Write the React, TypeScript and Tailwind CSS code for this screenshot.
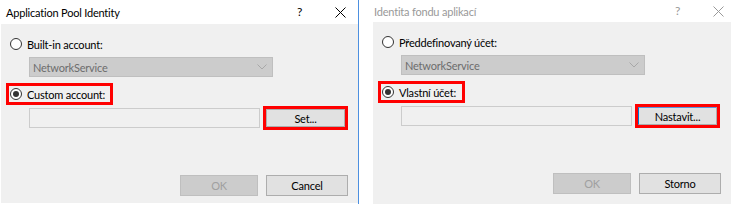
import React from 'react';

interface DialogProps {
  title: string;
  builtIn: string;
  custom: string;
  setLabel: string;
  cancelLabel: string;
  customBoxWidth: string;
  inactive?: boolean;
  focusedSet?: boolean;
}

const Radio = ({ checked }: { checked?: boolean }) => (
  <span className="w-[12px] h-[12px] rounded-full border border-[#333333] bg-white flex items-center justify-center shrink-0">
    {checked && <span className="w-[6px] h-[6px] rounded-full bg-[#333333]" />}
  </span>
);

const Dialog = ({
  title,
  builtIn,
  custom,
  setLabel,
  cancelLabel,
  customBoxWidth,
  inactive = false,
  focusedSet = false,
}: DialogProps) => {
  const titleColor = inactive ? 'text-[#999999]' : 'text-[#000000]';

  return (
    <div className="flex flex-col whitespace-nowrap tracking-[-0.2px]">
      {/* title bar */}
      <div className={`flex items-center ${inactive ? 'h-[22px]' : 'h-[24px]'} ${titleColor}`}>
        <span className="pl-[6px] text-[11px] leading-none flex-1">{title}</span>
        <span className="w-[38px] text-[12px] leading-none">?</span>
        <svg width="11" height="11" viewBox="0 0 11 11" className="mr-[12px]">
          <path d="M0.5 0.5 L10.5 10.5 M10.5 0.5 L0.5 10.5" stroke="currentColor" strokeWidth="1" />
        </svg>
      </div>

      {/* body */}
      <div className={`bg-[#f0f0f0] flex flex-col text-[11px] leading-none text-black ${inactive ? 'h-[182px] w-[358px] ml-[5px]' : 'h-[179px] w-[357px] ml-[1px]'}`}>
        <div className="mt-[14px] h-[12px] flex items-center pl-[9px]">
          <Radio />
          <span className="ml-[5px]">{builtIn}</span>
        </div>

        <div className="mt-[7px] ml-[28px] w-[244px] h-[20px] bg-[#cccccc] border border-[#bfbfbf] flex items-center justify-between px-[3px]">
          <span className="text-[#6d6d6d]">NetworkService</span>
          <svg width="10" height="6" viewBox="0 0 10 6" className="mr-[2px]">
            <path d="M0.5 0.5 L5 5 L9.5 0.5" stroke="#a8a8a8" strokeWidth="1" fill="none" />
          </svg>
        </div>

        <div className={`mt-[6px] ml-[5px] h-[22px] ${customBoxWidth} border-[3px] border-[#ff0000] flex items-center pl-[1px]`}>
          <Radio checked />
          <span className="ml-[5px]">{custom}</span>
        </div>

        <div className="mt-[1px] h-[24px] flex items-center">
          <div className="ml-[28px] w-[231px] h-[20px] bg-[#f0f0f0] border border-[#cccccc]" />
          <div className="ml-[3px] w-[85px] h-[24px] border-[3px] border-[#ff0000]">
            <div className={`w-full h-full bg-[#e1e1e1] border border-[#adadad] ${focusedSet ? 'border-l-[#0078d7] border-t-[#5a94dc]' : ''} flex items-center justify-center`}>
              {setLabel}
            </div>
          </div>
        </div>

        <div className="mt-[45px] flex justify-end gap-[8px] pr-[10px]">
          <div className="w-[78px] h-[21px] bg-[#cccccc] border border-[#bfbfbf] text-[#a0a0a0] flex items-center justify-center">
            OK
          </div>
          <div className="w-[82px] h-[21px] bg-[#e1e1e1] border border-[#adadad] flex items-center justify-center">
            {cancelLabel}
          </div>
        </div>
      </div>
    </div>
  );
};

export default function App() {
  return (
    <div
      className="w-[736px] h-[208px] bg-white flex items-start"
      style={{ fontFamily: 'Lato, "Noto Sans", sans-serif' }}
    >
      <div className="w-[359px] h-[204px] border-r border-[#4d90e0]">
        <Dialog
          title="Application Pool Identity"
          builtIn="Built-in account:"
          custom="Custom account:"
          setLabel="Set..."
          cancelLabel="Cancel"
          customBoxWidth="w-[107px]"
        />
      </div>
      <div className="ml-[9px] w-[368px]">
        <Dialog
          title="Identita fondu aplikací"
          builtIn="Předdefinovaný účet:"
          custom="Vlastní účet:"
          setLabel="Nastavit..."
          cancelLabel="Storno"
          customBoxWidth="w-[87px]"
          inactive
          focusedSet
        />
      </div>
    </div>
  );
}
